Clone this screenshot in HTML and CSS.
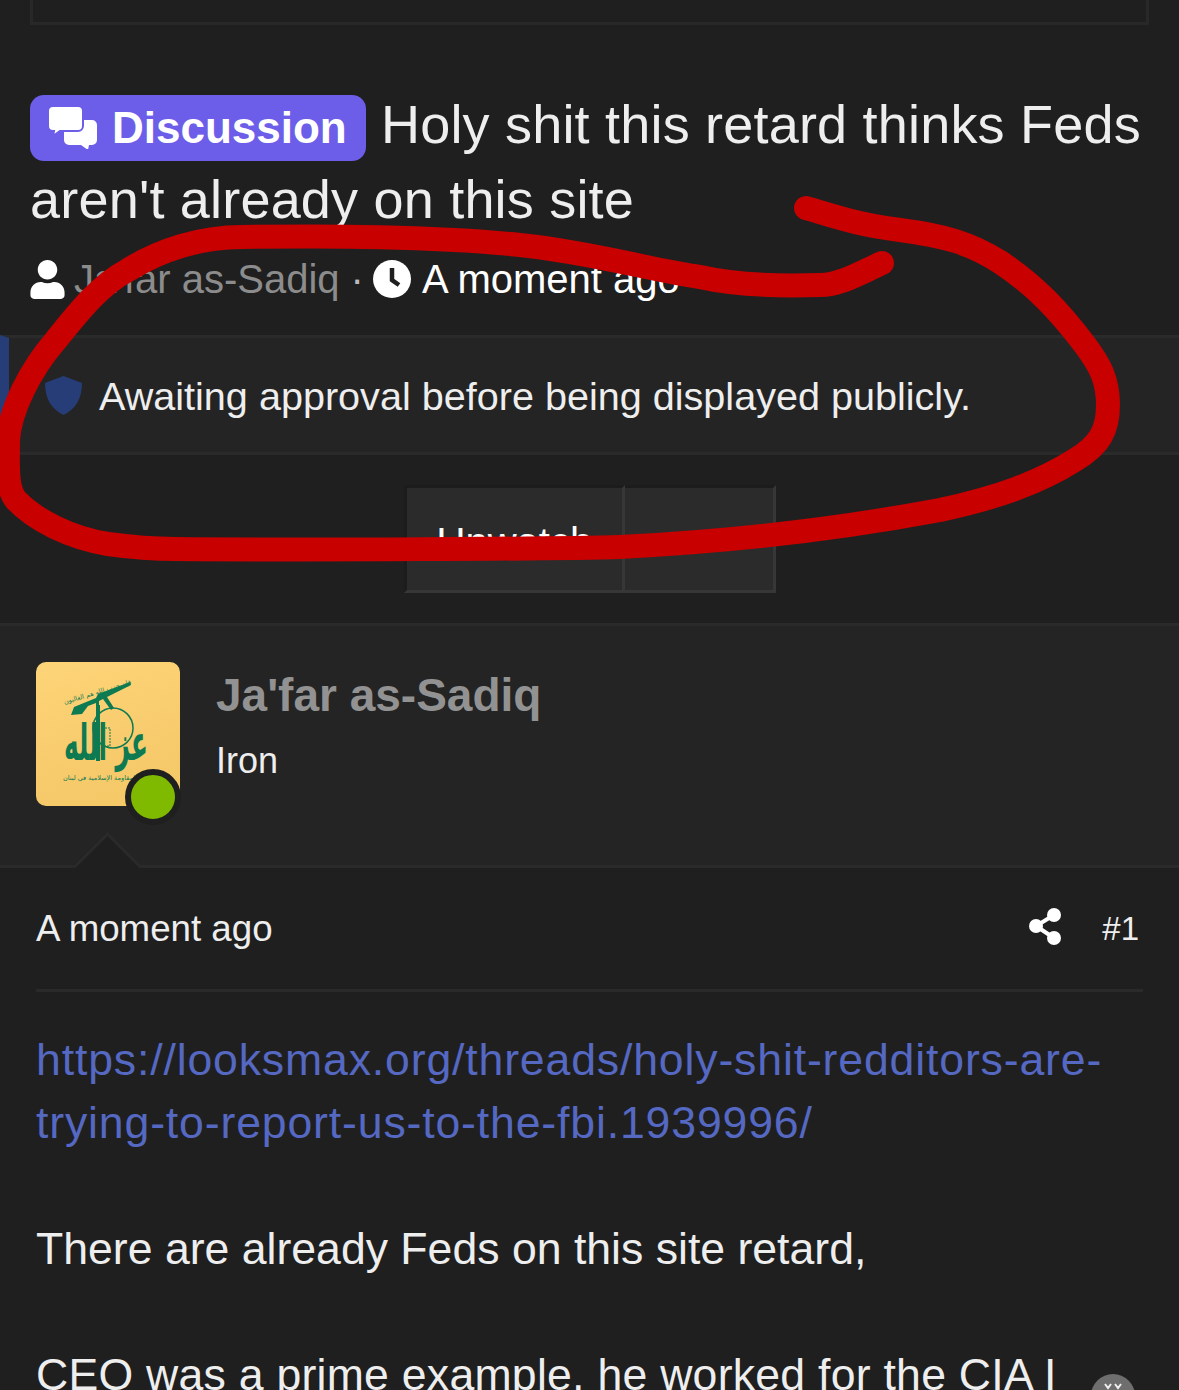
FILE: index.html
```html
<!DOCTYPE html>
<html lang="en">
<head>
  <meta charset="UTF-8">
  <title>Holy shit this retard thinks Feds aren't already on this site</title>
  <link rel="stylesheet" href="styles.css">
</head>
<body>
  <div class="page">
    <div class="top-box"></div>

    <header class="thread-head">
      <h1 class="thread-title">
        <span class="label-discussion">
          <svg class="icon-chat" viewBox="0 0 49 43">
            <path d="M21 14h23a5 5 0 0 1 5 5v15a5 5 0 0 1-5 5h-3l-1 5-7-5H21a5 5 0 0 1-5-5V19a5 5 0 0 1 5-5z"/>
            <path class="chat-front" d="M5 0h25a5 5 0 0 1 5 5v15a5 5 0 0 1-5 5H12l-7 5 1-5H5a5 5 0 0 1-5-5V5a5 5 0 0 1 5-5z"/>
          </svg>
          Discussion
        </span>
        Holy shit this retard thinks Feds aren't already on this site
      </h1>
      <div class="thread-meta">
        <svg class="icon-user" viewBox="0 0 448 512"><path d="M224 256c70.700 0 128-57.300 128-128S294.700 0 224 0 96 57.300 96 128s57.300 128 128 128zm89.600 32h-16.700c-22.200 10.200-46.900 16-72.900 16s-50.600-5.800-72.900-16h-16.700C60.200 288 0 348.200 0 422.400V464c0 26.500 21.500 48 48 48h352c26.500 0 48-21.500 48-48v-41.600c0-74.200-60.200-134.400-134.400-134.400z"/></svg>
        <span class="meta-author">Ja'far as-Sadiq</span>
        <span class="meta-dot">·</span>
        <svg class="icon-clock" viewBox="0 0 38 38">
          <circle cx="19" cy="19" r="19" fill="#fff"/>
          <path d="M19 8v12l7 5" fill="none" stroke="#1f1f1f" stroke-width="4.500"/>
        </svg>
        <span class="meta-time">A moment ago</span>
      </div>
    </header>

    <div class="notice">
      <svg class="icon-shield" viewBox="0 0 37 39"><path d="M18.500 0 L37 7 C37 22 31 33 18.500 39 C6 33 0 22 0 7 Z"/></svg>
      <span>Awaiting approval before being displayed publicly.</span>
    </div>

    <div class="button-row">
      <div class="button-group">
        <div class="button button-watch">Unwatch</div>
        <div class="button button-more"></div>
      </div>
    </div>

    <section class="post-user">
      <svg class="avatar" viewBox="0 0 144 144">
        <defs>
          <linearGradient id="avatarBg" x1="0" y1="0" x2="0.300" y2="1">
            <stop offset="0" stop-color="#fdd478"/>
            <stop offset="1" stop-color="#f5c868"/>
          </linearGradient>
        </defs>
        <rect width="144" height="144" fill="url(#avatarBg)"/>
        <g fill="#0d7a52">
          <path d="M35 53l3-8 22-9 2-4 32-12 1 3-24 12 7 11-3 2-8-11-4 2v6l-3 1v-5l-8 3-6 8z"/>
          <rect x="60" y="43" width="4" height="56"/>
          <path d="M66 66h8v18h-8z" fill="none" stroke="#0d7a52" stroke-width="1" stroke-dasharray="2 1"/>
          <text class="avatar-word" transform="translate(70 98) scale(0.620 1.250)" text-anchor="middle">عز الله</text>
          <text class="avatar-small" x="64" y="118" text-anchor="middle">المقاومة الإسلامية في لبنان</text>
          <text class="avatar-small" x="62" y="32" text-anchor="middle" transform="rotate(-17 62 32)">فإن حزب الله هم الغالبون</text>
        </g>
        <circle cx="77" cy="66" r="20" fill="none" stroke="#0d7a52" stroke-width="1.500"/>
      </svg>
      <span class="online-dot"></span>
      <div class="user-info">
        <div class="user-name">Ja'far as-Sadiq</div>
        <div class="user-rank">Iron</div>
      </div>
      <span class="user-arrow"></span>
    </section>

    <article class="post">
      <div class="post-head">
        <span>A moment ago</span>
        <div class="post-tools">
          <svg class="icon-share" viewBox="0 0 32 37">
            <path d="M25 7 7 18l18 12" fill="none" stroke="#fff" stroke-width="4"/>
            <circle cx="25" cy="7" r="7"/>
            <circle cx="7" cy="18" r="7"/>
            <circle cx="25" cy="30" r="7"/>
          </svg>
          <span class="post-number">#1</span>
        </div>
      </div>
      <div class="post-body">
        <a class="post-link" href="#">https://looksmax.org/threads/holy-shit-redditors-are-trying-to-report-us-to-the-fbi.1939996/</a>
        <p>There are already Feds on this site retard,</p>
        <p class="post-cut">CEO was a prime example, he worked for the CIA I</p>
      </div>
    </article>

    <div class="scroll-button">
      <svg viewBox="0 0 24 10"><path d="M4 4l3 4 3-4M14 4l3 4 3-4" fill="none" stroke="#eee" stroke-width="2"/></svg>
    </div>

    <svg class="scribble" viewBox="0 0 1179 1390">
      <path d="M806 208 C840 218 860 225 900 230 C945 236 970 243 1000 262 C1035 285 1060 312 1085 345 C1100 365 1108 380 1108 405 C1108 430 1100 445 1075 460 C1040 482 1000 497 940 510 C860 525 760 540 620 547 C560 549 300 550 175 549 C150 549 130 547 108 544 C70 538 35 520 16 500 C6 488 8 465 8 440 C10 410 30 370 56 340 C80 310 100 285 128 270 C160 250 200 237 242 237 C330 236 430 236 520 245 C590 252 650 270 700 277 C740 286 790 286 820 285 C840 285 860 273 882 263"/>
    </svg>
  </div>
</body>
</html>
```

FILE: styles.css
```css
:root {
  --bg: #1f1f1f;
  --bg-light: #242424;
  --line: #2a2a2a;
  --blue: #263d78;
  --purple: #6c5ee8;
}
html, body {
  margin: 0;
  height: 1390px;
  overflow: hidden;
}
body {
  background-color: var(--bg);
  color: #eeeeee;
  font-family: "Liberation Sans", Arial, sans-serif;
}
.page {
  position: relative;
  height: 1390px;
  overflow: hidden;
}
.top-box {
  height: 22px;
  margin: 0 30px;
  border: 3px solid #282828;
  border-top: none;
}
.thread-head {
  padding: 62px 30px 0;
}
.thread-title {
  margin: 0;
  font-size: 54px;
  font-weight: normal;
  letter-spacing: 0.2px;
  line-height: 75px;
}
.label-discussion {
  display: inline-flex;
  align-items: center;
  gap: 15px;
  height: 66px;
  padding: 0 19px 0 18px;
  border-radius: 14px;
  background-color: var(--purple);
  color: #ffffff;
  font-size: 44px;
  font-weight: bold;
  letter-spacing: 0;
  line-height: 66px;
  vertical-align: -6px;
}
.icon-chat {
  width: 49px;
  height: 43px;
  fill: #ffffff;
}
.chat-front {
  stroke: var(--purple);
  stroke-width: 2;
}
.thread-meta {
  display: flex;
  align-items: center;
  height: 50px;
  margin-top: 17px;
  font-size: 40px;
}
.icon-user {
  width: 35px;
  height: 39px;
  margin-right: 9px;
  fill: #ffffff;
}
.meta-author {
  color: #8c8c8c;
}
.meta-dot {
  margin: 0 9px 0 11px;
  color: #bbbbbb;
}
.icon-clock {
  width: 38px;
  height: 38px;
  margin-right: 11px;
}
.meta-time {
  color: #ffffff;
}
.notice {
  display: flex;
  align-items: center;
  gap: 17px;
  box-sizing: border-box;
  height: 120px;
  margin-top: 31px;
  padding-left: 36px;
  border-top: 3px solid var(--line);
  border-bottom: 3px solid var(--line);
  border-left: 9px solid var(--blue);
  background-color: var(--bg-light);
  font-size: 39.600px;
}
.notice span {
  padding-top: 3px;
}
.icon-shield {
  width: 37px;
  height: 39px;
  fill: var(--blue);
}
.button-row {
  display: flex;
  justify-content: center;
  padding: 30px 0;
}
.button-group {
  display: flex;
  height: 108px;
}
.button {
  box-sizing: border-box;
  background-color: #2b2b2b;
  border: 3px solid;
  border-color: #1c1c1c #373737 #373737 #1c1c1c;
  color: #ffffff;
  font-size: 40px;
  line-height: 108px;
}
.button-watch {
  width: 221px;
  padding-left: 30px;
}
.button-more {
  width: 151px;
  border-left: none;
}
.post-user {
  position: relative;
  display: flex;
  gap: 36px;
  box-sizing: border-box;
  height: 245px;
  padding: 36px;
  border-top: 3px solid var(--line);
  border-bottom: 3px solid var(--line);
  background-color: var(--bg-light);
}
.avatar {
  width: 144px;
  height: 144px;
  border-radius: 10px;
}
.avatar-word {
  font-family: "DejaVu Sans", sans-serif;
  font-size: 40px;
  font-weight: bold;
}
.avatar-small {
  font-family: "DejaVu Sans", sans-serif;
  font-size: 6.500px;
}
.online-dot {
  position: absolute;
  left: 125px;
  top: 143px;
  box-sizing: border-box;
  width: 56px;
  height: 56px;
  border: 6px solid #1f1f1f;
  border-radius: 50%;
  background-color: #7fb900;
}
.user-name {
  margin-top: 6px;
  color: #929292;
  font-size: 46px;
  font-weight: bold;
  line-height: 55px;
}
.user-rank {
  margin-top: 17px;
  font-size: 36px;
  line-height: 42px;
}
.user-arrow {
  position: absolute;
  left: 83px;
  bottom: -26px;
  width: 46px;
  height: 46px;
  border-top: 3px solid var(--line);
  border-left: 3px solid var(--line);
  background-color: var(--bg);
  transform: rotate(45deg);
}
.post {
  position: relative;
  padding: 0 36px;
}
.post-head {
  display: flex;
  justify-content: space-between;
  align-items: center;
  height: 121px;
  border-bottom: 3px solid var(--line);
  font-size: 36.700px;
}
.post-tools {
  display: flex;
  align-items: center;
  gap: 41px;
  padding-right: 4px;
}
.post-number {
  font-size: 33px;
}
.icon-share {
  width: 32px;
  height: 37px;
  margin-top: -4px;
  fill: #ffffff;
}
.post-body {
  padding-top: 36px;
  font-size: 44.600px;
  line-height: 63px;
}
.post-link {
  color: #5568c2;
  letter-spacing: 0.850px;
  text-decoration: none;
}
.post-body p {
  margin: 63px 0 0;
}
.post-body .post-cut {
  letter-spacing: 0.250px;
}
.scroll-button {
  position: absolute;
  left: 1091px;
  top: 1374px;
  width: 44px;
  height: 44px;
  border-radius: 50%;
  background-color: #6e6e6e;
}
.scroll-button svg {
  display: block;
  width: 24px;
  margin: 6px auto 0;
}
.scribble {
  position: absolute;
  left: 0;
  top: 0;
  width: 1179px;
  height: 1390px;
  fill: none;
  stroke: #c80000;
  stroke-width: 24;
  stroke-linecap: round;
  stroke-linejoin: round;
}
```
